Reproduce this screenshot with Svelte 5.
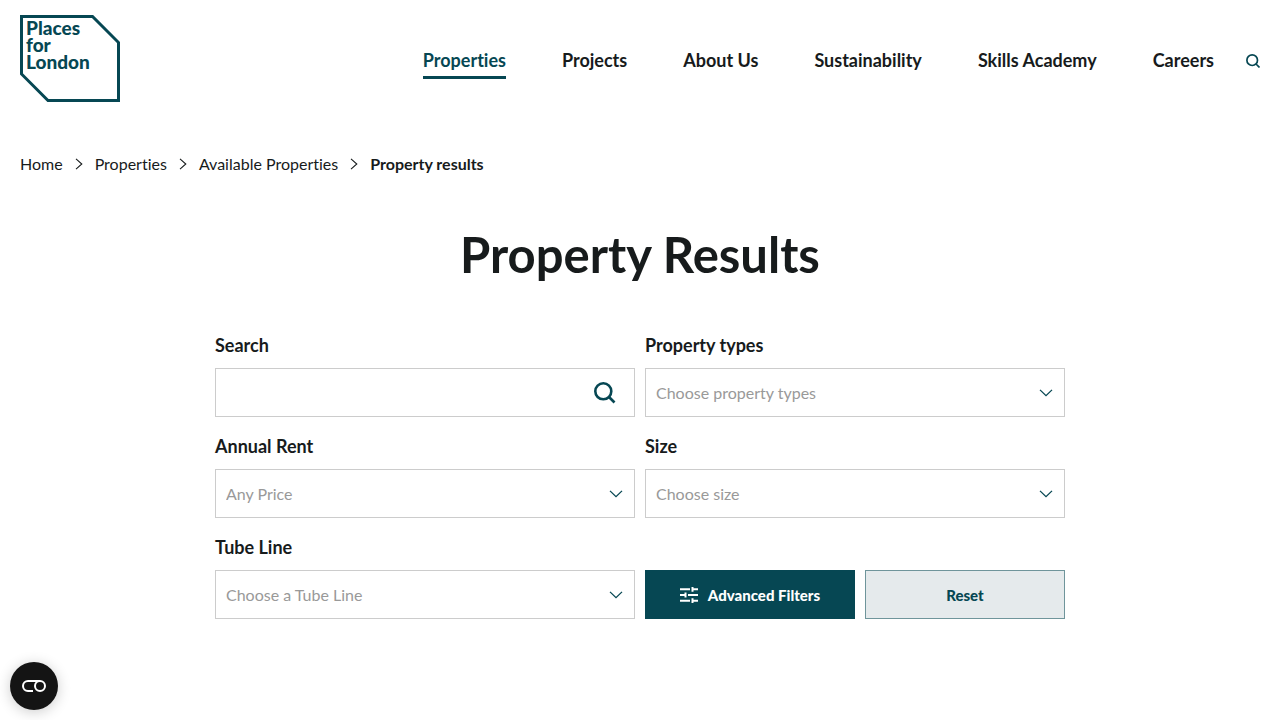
<script lang="ts">
	const navItems = [
		"Properties",
		"Projects",
		"About Us",
		"Sustainability",
		"Skills Academy",
		"Careers",
	];
	const crumbs = ["Home", "Properties", "Available Properties"];

	const filters = [
		{ id: "types", label: "Property types", placeholder: "Choose property types", options: ["Arches", "Offices", "Retail"] },
		{ id: "rent", label: "Annual Rent", placeholder: "Any Price", options: ["Up to £25,000", "Up to £50,000"] },
		{ id: "size", label: "Size", placeholder: "Choose size", options: ["Small", "Medium", "Large"] },
		{ id: "line", label: "Tube Line", placeholder: "Choose a Tube Line", options: ["Central", "Jubilee", "Victoria"] },
	];

	let search = $state("");
	let chosen: Record<string, string> = $state({ types: "", rent: "", size: "", line: "" });

	function reset() {
		search = "";
		for (const filter of filters) {
			chosen[filter.id] = "";
		}
	}

	function submit(e: SubmitEvent) {
		e.preventDefault();
	}
</script>

<header>
	<a class="logo" href="/" aria-label="Places for London">
		<svg width="100" height="88" viewBox="0 0 100 88">
			<path d="M1.5 1.5H72.5L98.5 27.5V85.5H28L1.5 59Z" fill="none" stroke="#064753" stroke-width="3" />
			<text x="6" y="20">Places</text>
			<text x="6" y="37">for</text>
			<text x="6" y="54">London</text>
		</svg>
	</a>
	<nav aria-label="Main">
		{#each navItems as item, i}
			<a href="/" class:active={i === 0}>{item}</a>
		{/each}
	</nav>
	<button class="icon" aria-label="Open search">
		<svg width="14" height="14" viewBox="0 0 14 14" fill="none" stroke="#064753" stroke-width="1.7">
			<circle cx="6.2" cy="6.2" r="5.3" />
			<path d="M10 10L13.5 13.5" />
		</svg>
	</button>
</header>

<main>
	<nav class="crumbs" aria-label="Breadcrumb">
		{#each crumbs as crumb}
			<a href="/">{crumb}</a>
			<svg width="8" height="12" viewBox="0 0 8 12" fill="none" stroke="#171b1c" stroke-width="1.1">
				<path d="M1 0.8L6.8 6L1 11.2" />
			</svg>
		{/each}
		<strong>Property results</strong>
	</nav>

	<h1>Property Results</h1>

	<form onsubmit={submit}>
		<div class="field">
			<label for="search">Search</label>
			<div class="control">
				<input id="search" type="text" bind:value={search} />
				<button class="icon find" aria-label="Search">
					<svg width="22" height="22" viewBox="0 0 22 22" fill="none" stroke="#064753" stroke-width="2.6">
						<circle cx="9.3" cy="9.3" r="8" />
						<path d="M15 15L20.5 20.5" />
					</svg>
				</button>
			</div>
		</div>
		{#each filters as filter}
			<div class="field">
				<label for={filter.id}>{filter.label}</label>
				<div class="control">
					<select id={filter.id} bind:value={chosen[filter.id]}>
						<option value="">{filter.placeholder}</option>
						{#each filter.options as option}
							<option>{option}</option>
						{/each}
					</select>
					<svg class="chevron" width="14" height="8" viewBox="0 0 14 8" fill="none" stroke="#064753" stroke-width="1.3">
						<path d="M1 0.9L7 6.7L13 0.9" />
					</svg>
				</div>
			</div>
		{/each}
		<div class="actions">
			<button class="advanced" type="button">
				<svg width="18" height="16" viewBox="0 0 18 16" fill="none" stroke="#fff" stroke-width="2">
					<path d="M0 2.2H10M12 2.2H18M0 8H5M8 8H18M0 13.8H10M12 13.8H18" />
					<path d="M12.5 0V4.8M5.5 5.4V10.6M12.5 11.2V16" />
				</svg>
				Advanced Filters
			</button>
			<button class="reset" type="button" onclick={reset}>Reset</button>
		</div>
	</form>
</main>

<button class="consent" aria-label="Cookie preferences">
	<svg width="24" height="12" viewBox="0 0 24 12" fill="none" stroke="#fff" stroke-width="2">
		<path d="M18 1H6A5 5 0 0 0 6 11H11" />
		<circle cx="18" cy="6" r="5" />
	</svg>
</button>

<style>
	:global(body) {
		background: #fff;
		color: #171b1c;
		font-family: Lato, "Open Sans", sans-serif;
		font-variant-ligatures: none;
	}
	a {
		color: inherit;
		text-decoration: none;
	}
	button,
	input,
	select {
		box-sizing: border-box;
		margin: 0;
		font-family: inherit;
	}
	button {
		cursor: pointer;
	}
	svg {
		display: block;
	}
	header {
		display: flex;
		align-items: flex-start;
		padding: 15px 20px 0;
	}
	.logo text {
		fill: #064753;
		font-size: 19px;
		font-weight: 900;
	}
	header nav {
		display: flex;
		gap: 56px;
		margin: 33px 32px 0 auto;
	}
	header nav a {
		padding-bottom: 3px;
		border-bottom: 3px solid transparent;
		font-size: 18px;
		font-weight: 700;
		line-height: 25px;
	}
	header nav a.active {
		border-color: #064753;
		color: #064753;
	}
	.icon {
		padding: 0;
		border: 0;
		background: none;
	}
	header .icon {
		margin-top: 39px;
	}
	.crumbs {
		display: flex;
		align-items: center;
		gap: 12px;
		margin-top: 50px;
		padding: 0 20px;
		font-size: 16px;
		line-height: 22px;
	}
	h1 {
		margin: 47px 0 0;
		font-size: 49px;
		font-weight: 700;
		line-height: 64px;
		text-align: center;
	}
	form {
		display: grid;
		grid-template-columns: 1fr 1fr;
		gap: 17px 10px;
		max-width: 850px;
		margin: 47px auto 0;
	}
	label {
		display: block;
		margin-bottom: 11px;
		font-size: 18px;
		font-weight: 700;
		line-height: 24px;
	}
	.control {
		display: grid;
		align-items: center;
	}
	.control > * {
		grid-area: 1 / 1;
	}
	input,
	select {
		width: 100%;
		height: 49px;
		padding: 0 10px;
		border: 1px solid #ccc;
		border-radius: 0;
		background: #fff;
		color: #999;
		font-size: 16px;
		appearance: none;
	}
	.find {
		justify-self: end;
		margin-right: 19px;
	}
	.chevron {
		justify-self: end;
		margin-right: 12px;
		pointer-events: none;
	}
	.actions {
		display: flex;
		align-items: flex-end;
		gap: 10px;
	}
	.actions button {
		display: flex;
		align-items: center;
		justify-content: center;
		height: 49px;
		padding: 0;
		border: 1px solid #064753;
		font-size: 15px;
		font-weight: 900;
	}
	.advanced {
		flex: 21;
		gap: 10px;
		background: #064753;
		color: #fff;
	}
	.actions .reset {
		flex: 20;
		border-color: #6f959b;
		background: #e5eaec;
		color: #064753;
	}
	.consent {
		position: fixed;
		bottom: 10px;
		left: 10px;
		display: grid;
		place-items: center;
		width: 48px;
		height: 48px;
		padding: 0;
		border: 0;
		border-radius: 50%;
		background: #141414;
		box-shadow: 0 2px 14px rgba(0, 0, 0, 0.2);
	}
</style>
